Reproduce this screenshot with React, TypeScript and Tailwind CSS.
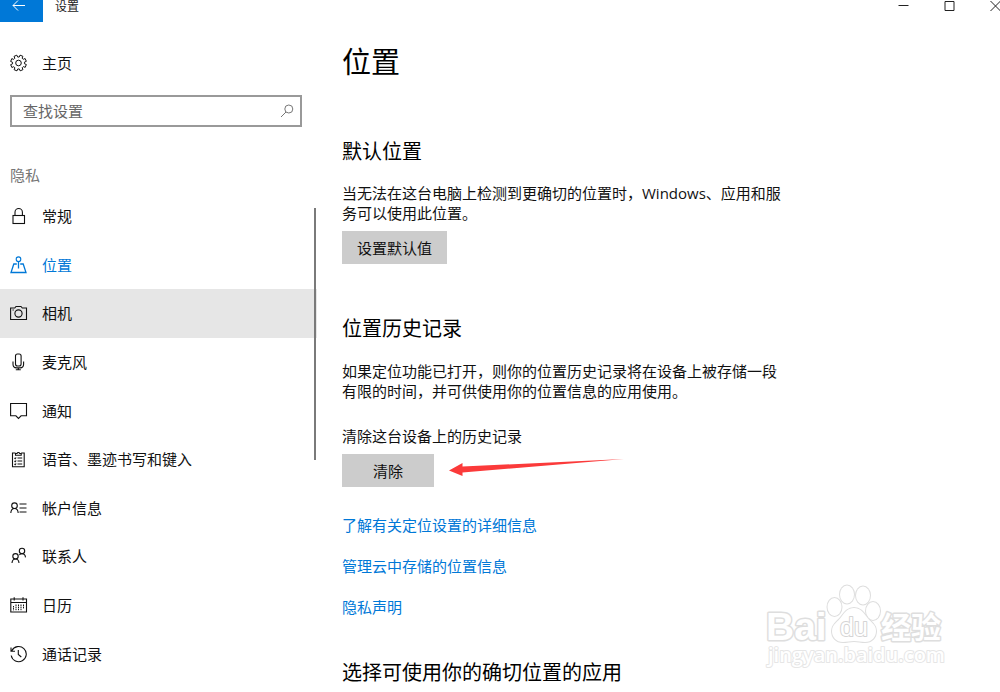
import type { ReactNode } from 'react'

interface NavItem {
    label: string
    icon: ReactNode
    state?: 'active' | 'hover'
}

// outline of an eight-toothed gear wheel
const gearPath =
    Array.from({ length: 8 }, (_, i) => {
        const points = [
            [-15, 6],
            [-11, 8],
            [11, 8],
            [15, 6],
        ]
        return points
            .map(([deg, r], j) => {
                const a = ((i * 45 + 22 + deg) * Math.PI) / 180
                const x = (8.5 + r * Math.cos(a)).toFixed(2)
                const y = (9 + r * Math.sin(a)).toFixed(2)
                return `${i === 0 && j === 0 ? 'M' : 'L'}${x} ${y}`
            })
            .join('')
    }).join('') + 'Z'

const Icon = ({ children }: { children: ReactNode }) => (
    <svg
        viewBox="0 0 18 18"
        className="w-[18px] h-[18px] shrink-0"
        fill="none"
        stroke="currentColor"
        strokeWidth="1.1"
        aria-hidden="true"
    >
        {children}
    </svg>
)

const navItems: NavItem[] = [
    {
        label: '常规',
        icon: (
            <>
                <rect x="3" y="8.5" width="11.5" height="8" />
                <path d="M5 8.5V5.2a3.7 3.7 0 0 1 7.4 0v3.3" />
            </>
        ),
    },
    {
        label: '位置',
        state: 'active',
        icon: (
            <>
                <circle cx="8.5" cy="3.2" r="2.3" />
                <path d="M8.5 5.5V12.500M6.800 8H3.800L1 16.500h15L13.200 8h-3" strokeWidth="1.300" />
            </>
        ),
    },
    {
        label: '相机',
        state: 'hover',
        icon: (
            <>
                <path d="M.6 4h4.2L6 2.5h5L12.3 4h4.2v11.5H.6z" />
                <circle cx="8.5" cy="9.5" r="3.6" />
                <path d="M2.5 6h1.3" />
            </>
        ),
    },
    {
        label: '麦克风',
        icon: (
            <>
                <rect x="5.5" y="1" width="5.6" height="12" rx="2" />
                <path d="M3 8.5v2.8c0 2.4 1.6 3.6 3.5 3.6h3.6c1.9 0 3.5-1.2 3.5-3.6V8.5M8.3 15v1.8M5.8 16.8h5" />
            </>
        ),
    },
    {
        label: '通知',
        icon: <path d="M.6 1.5h15.9v12.3h-5.4L8.5 16.5l-2.600-2.700H.6z" />,
    },
    {
        label: '语音、墨迹书写和键入',
        icon: (
            <>
                <path d="M5.500 3H2.500v13.700h11.700V3h-3M5.500 5.200V3.500h1.500a1.400 1.400 0 0 1 2.700 0h1.500v1.700z" />
                <path d="M4.500 8l.7.7 1-1.200M7.500 8h4.700M4.500 11l.7.7 1-1.200M7.500 11h4.700M4.500 14l.7.7 1-1.200M7.500 14h4.700" />
            </>
        ),
    },
    {
        label: '帐户信息',
        icon: (
            <>
                <circle cx="4.500" cy="6.700" r="2.800" />
                <path d="M.8 14c.2-2.800 1.600-4.500 3.700-4.500S8 11.200 8.200 14M9.500 5h7M9.500 9h7M9.500 13h7" />
            </>
        ),
    },
    {
        label: '联系人',
        icon: (
            <>
                <circle cx="12" cy="4" r="2.700" />
                <circle cx="5.500" cy="9.300" r="2.700" />
                <path d="M9.300 8c.7-.8 1.600-1.300 2.700-1.300 1.900 0 3.300 1.400 3.500 3.700M2 16c.2-2.600 1.500-4 3.500-4S8.800 13.400 9 16" />
            </>
        ),
    },
    {
        label: '日历',
        icon: (
            <>
                <path d="M.8 3h15.700v13H.8zM.8 6.500h15.700M4.200 1.300v3.200M13 1.300v3.200" />
                <path
                    d="M3.500 10v4.500M6 8.500v6M8.500 8.500v6M11 8.500v6M13.500 8.500v4.500"
                    strokeWidth="1"
                    strokeDasharray="1.500 .6"
                />
            </>
        ),
    },
    {
        label: '通话记录',
        icon: <path d="M1.800 5.800A7.600 7.600 0 1 1 1.200 10.500M1 2.500v3.700h4M8.300 5v4.500l3 2.500" />,
    },
]

const navStyles = {
    active: 'text-[#0078d7]',
    hover: 'bg-[#e6e6e6]',
    default: '',
}

const TitleBar = () => (
    <header className="flex h-[22px] shrink-0 items-start overflow-hidden text-[#222]">
        <button aria-label="后退" className="flex h-[22px] w-[43px] items-start bg-[#0078d7] pl-3 text-white">
            <svg width="13" height="12" viewBox="0 0 13 12" fill="none" stroke="currentColor" aria-hidden="true">
                <path d="M13 5.500H1M6 .5l-5 5 5 5" />
            </svg>
        </button>
        <span className="ml-3 mt-px text-[12px] leading-[12px]">设置</span>
        <div className="ml-auto -mr-[18px] flex">
            <button aria-label="最小化" className="flex h-3 w-[46px] justify-center">
                <svg width="11" height="12" fill="none" stroke="currentColor" aria-hidden="true">
                    <path d="M.5 5.500h10" />
                </svg>
            </button>
            <button aria-label="最大化" className="flex h-3 w-[46px] justify-center">
                <svg width="11" height="12" fill="none" stroke="currentColor" aria-hidden="true">
                    <path d="M1 1.500h9v9H1z" />
                </svg>
            </button>
            <button aria-label="关闭" className="flex h-3 w-[46px] justify-center">
                <svg width="11" height="12" fill="none" stroke="currentColor" aria-hidden="true">
                    <path d="M.5 1l10 10M10.500 1l-10 10" />
                </svg>
            </button>
        </div>
    </header>
)

const Sidebar = () => (
    <aside className="w-[317px] shrink-0 pt-[31px]">
        <a href="#home" className="flex h-5 items-center gap-[14px] pl-[10px]">
            <Icon>
                <path d={gearPath} strokeLinejoin="round" strokeWidth="1" />
                <circle cx="8.5" cy="9" r="2.800" strokeWidth="1" />
            </Icon>
            主页
        </a>

        <div className="relative ml-[10px] mr-[15px] mt-[22px]">
            <input
                type="search"
                aria-label="查找设置"
                placeholder="查找设置"
                className="block h-8 w-full border-2 border-[#999] bg-white pb-px pl-[11px] pr-9 placeholder:text-[#666] outline-none"
            />
            <svg
                viewBox="0 0 14 14"
                className="absolute right-2 top-[9px] w-[14px] h-[14px] text-[#777]"
                fill="none"
                stroke="currentColor"
                aria-hidden="true"
            >
                <circle cx="8.800" cy="5" r="4" />
                <path d="M6 8L1 13" />
            </svg>
        </div>

        <h2 className="mt-[38px] pl-[10px] leading-5 text-[#767676]">隐私</h2>

        <nav className="relative mt-[7px]">
            <ul className="grid h-[486px] auto-rows-fr">
                {navItems.map((item) => (
                    <li key={item.label} className="flex">
                        <a
                            href="#"
                            className={`flex w-full items-center gap-[14px] pl-[10px] ${navStyles[item.state ?? 'default']}`}
                        >
                            <Icon>{item.icon}</Icon>
                            {item.label}
                        </a>
                    </li>
                ))}
            </ul>
            {/* Scroll thumb */}
            <div className="absolute right-[1px] top-4 h-[252px] w-[2px] bg-[#7a7a7a]" />
        </nav>
    </aside>
)

const Watermark = () => (
    <svg
        viewBox="0 0 184 92"
        className="pointer-events-none absolute bottom-[18px] right-[52px] h-[92px] w-[184px]"
        fill="#fff"
        stroke="#dedede"
        strokeWidth="3"
        strokeLinejoin="round"
        paintOrder="stroke"
        role="img"
        aria-label="Baidu 经验"
    >
        <text x="2" y="58" fontSize="39" fontWeight="700" fontFamily="Liberation Sans, sans-serif">
            Bai
        </text>
        <g strokeWidth="2">
            <ellipse cx="70.500" cy="25" rx="7" ry="9" />
            <ellipse cx="83" cy="12.500" rx="7" ry="9" />
            <ellipse cx="99" cy="13.500" rx="7" ry="9" />
            <ellipse cx="109" cy="29" rx="7" ry="9" />
            <path d="M90 26c-6 0-9 4-12 8-4 6-10 8-10 15 0 6 4 11 11 11 4 0 7-1 11-1s7 1 11 1c7 0 11-5 11-11 0-7-6-9-10-15-3-4-6-8-12-8z" />
        </g>
        <text x="76" y="54" fontSize="25" strokeWidth="2" stroke="#d4d4d4" fontFamily="Liberation Sans, sans-serif">
            du
        </text>
        <text x="117" y="56" fontSize="30" fontWeight="700" fontFamily="Noto Sans CJK SC, sans-serif">
            经验
        </text>
        <text x="4" y="80" fontSize="20" fontWeight="600" strokeWidth="2" stroke="#e6e6e6" fontFamily="Open Sans, sans-serif">
            jingyan.baidu.com
        </text>
    </svg>
)

const App = () => {
    return (
        <div className="relative flex min-h-screen flex-col overflow-hidden bg-white font-['Open_Sans','Noto_Sans_CJK_SC',sans-serif] text-[15px] leading-5 text-[#111]">
            <TitleBar />
            <div className="flex flex-1">
                <Sidebar />
                <main className="min-w-0 flex-1 pl-[25px] pr-6 pt-5">
                    <h1 className="text-[29px] leading-10 text-black">位置</h1>

                    <section className="mt-14">
                        <h2 className="text-[20px] leading-7 text-black">默认位置</h2>
                        <p className="mt-[17px] max-w-[446px]">
                            当无法在这台电脑上检测到更确切的位置时，Windows、应用和服务可以使用此位置。
                        </p>
                        <button className="mt-2 h-[33px] bg-[#ccc] px-[15px]">设置默认值</button>
                    </section>

                    <section className="mt-[51px]">
                        <h2 className="text-[20px] leading-7 text-black">位置历史记录</h2>
                        <p className="mt-[18px] max-w-[446px]">
                            如果定位功能已打开，则你的位置历史记录将在设备上被存储一段有限的时间，并可供使用你的位置信息的应用使用。
                        </p>
                        <p className="mt-[25px]">清除这台设备上的历史记录</p>
                        <div className="mt-2 flex items-start gap-[15px]">
                            <button className="h-[33px] w-[92px] bg-[#ccc]">清除</button>
                            <svg width="176" height="24" viewBox="0 0 176 24" fill="#fb3a3a" aria-hidden="true">
                                <path d="M0 16.500L13.500 9v3.500L175 5 13.500 18.500V22z" />
                            </svg>
                        </div>
                    </section>

                    <div className="mt-7 flex flex-col items-start gap-[21px] text-[#0078d7]">
                        <a href="#location-help">了解有关定位设置的详细信息</a>
                        <a href="#cloud-location">管理云中存储的位置信息</a>
                        <a href="#privacy">隐私声明</a>
                    </div>

                    <h2 className="mt-[42px] text-[20px] leading-7 text-black">选择可使用你的确切位置的应用</h2>
                </main>
            </div>
            <Watermark />
        </div>
    )
}

export default App
